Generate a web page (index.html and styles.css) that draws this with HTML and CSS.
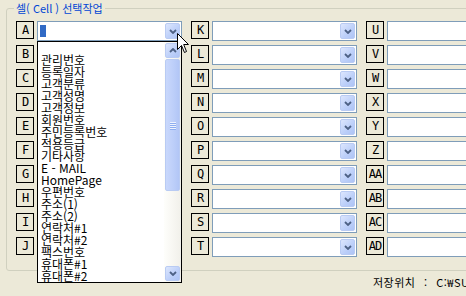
FILE: index.html
```html
<!DOCTYPE html>
<html lang="ko">
<head>
    <meta charset="UTF-8">
    <title>셀 선택작업</title>
    <link rel="stylesheet" href="styles.css">
</head>
<body>
<fieldset class="group">
    <legend>셀( Cell ) 선택작업</legend>
    <div class="cols" id="cols"></div>
</fieldset>
<div class="footer">저장위치 : C:₩SU</div>
<svg class="cursor" width="13" height="21" viewBox="0 0 13 21">
    <path d="M0.5 0.5V16.5L4.5 12.5L7.5 19.5L9.5 18.5L6.7 11.5H11.5Z" fill="#fff" stroke="#000"/>
</svg>
<script>
    var keys = ['A', 'B', 'C', 'D', 'E', 'F', 'G', 'H', 'I', 'J',
        'K', 'L', 'M', 'N', 'O', 'P', 'Q', 'R', 'S', 'T',
        'U', 'V', 'W', 'X', 'Y', 'Z', 'AA', 'AB', 'AC', 'AD'];
    var fields = ['', '관리번호', '등록일자', '고객분류', '고객성명', '고객정보', '회원번호', '주민등록번호',
        '적용등급', '기타사항', 'E - MAIL', 'HomePage', '우편번호', '주소(1)', '주소(2)',
        '연락처#1', '연락처#2', '팩스번호', '휴대폰#1', '휴대폰#2'];
    var chevron = '<svg width="8" height="5" viewBox="0 0 8 5"><path d="M1 1L4 4L7 1" fill="none" stroke="#4d6185" stroke-width="1.8"/></svg>';
    var chevronUp = '<svg width="8" height="5" viewBox="0 0 8 5"><path d="M1 4L4 1L7 4" fill="none" stroke="#4d6185" stroke-width="1.8"/></svg>';

    function makeList() {
        var html = '<div class="list"><div class="items">';
        for (var i = 0; i < fields.length; i++) {
            html += '<div>' + fields[i] + '</div>';
        }
        html += '</div><div class="scroll">' +
            '<div class="sbtn">' + chevronUp + '</div>' +
            '<div class="thumb"><i></i><i></i><i></i><i></i></div>' +
            '<div class="track"></div>' +
            '<div class="sbtn">' + chevron + '</div></div></div>';
        return html;
    }

    var cols = document.getElementById('cols');
    for (var c = 0; c < 3; c++) {
        var col = document.createElement('div');
        col.className = 'col';
        for (var r = 0; r < 10; r++) {
            var idx = c * 10 + r;
            var row = document.createElement('div');
            row.className = 'row';
            var html = '<div class="key">' + keys[idx] + '</div><div class="combo">';
            if (idx === 0) {
                html += '<span class="sel"></span>';
            }
            html += '<div class="btn">' + chevron + '</div>';
            if (idx === 0) {
                html += makeList();
            }
            html += '</div>';
            row.innerHTML = html;
            col.appendChild(row);
        }
        cols.appendChild(col);
    }
</script>
</body>
</html>
```

FILE: styles.css
```css
* {
    box-sizing: border-box;
}

html, body {
    margin: 0;
    height: 100%;
    overflow: hidden;
}

body {
    position: relative;
    background-color: #ece9d8;
    color: #000;
    font-family: "Noto Sans CJK KR", sans-serif;
    font-size: 12px;
}

.group {
    margin: 1px 0 0 6px;
    width: 560px;
    height: 270px;
    border: 1px solid #d0d0bf;
    border-radius: 3px;
    padding: 6px 0 0 9px;
}

.group legend {
    margin-left: -2px;
    padding: 0 2px;
    color: #0046d5;
    font-size: 11px;
    line-height: 14px;
}

.cols {
    display: flex;
    gap: 9px;
}

.col {
    display: flex;
    flex-direction: column;
    gap: 4px;
}

.row {
    display: flex;
    gap: 3px;
    height: 20px;
}

.key {
    width: 18px;
    height: 18px;
    border: 1px solid #000;
    font-family: "DejaVu Sans Mono", monospace;
    font-size: 12px;
    line-height: 16px;
    text-align: center;
    letter-spacing: -1px;
}

.combo {
    position: relative;
    display: flex;
    width: 145px;
    height: 20px;
    padding: 1px;
    border: 1px solid #7f9db9;
    background-color: #fff;
}

.combo .sel {
    margin: 2px 0 0 1px;
    width: 6px;
    height: 12px;
    background-color: #316ac5;
}

.btn, .sbtn {
    display: flex;
    align-items: center;
    justify-content: center;
    width: 15px;
    height: 16px;
    border: 1px solid #b9cbf3;
    border-radius: 2px;
    background: linear-gradient(135deg, #dce6fd, #bccff9 60%, #aec4f5);
}

.btn {
    margin-left: auto;
}

.list {
    position: absolute;
    left: -1px;
    top: 19px;
    z-index: 2;
    display: flex;
    width: 145px;
    height: 242px;
    border: 1px solid #000;
    background-color: #fff;
}

.items {
    flex: 1;
    padding-left: 3px;
}

.items div {
    height: 12px;
    line-height: 12px;
    white-space: nowrap;
}

.scroll {
    display: flex;
    flex-direction: column;
    gap: 1px;
    width: 17px;
    padding: 1px;
    background: linear-gradient(to right, #fefefb, #f1f0ea);
}

.sbtn {
    height: 15px;
}

.thumb {
    display: flex;
    flex-direction: column;
    align-items: center;
    justify-content: center;
    gap: 1px;
    height: 132px;
    border: 1px solid #b9cbf3;
    border-radius: 2px;
    background: linear-gradient(to right, #c9d8fc, #bccef9 60%, #b2c6f6);
}

.thumb i {
    width: 6px;
    height: 1px;
    background-color: #eef3fe;
    box-shadow: 0 1px 0 #8eaef0;
}

.track {
    flex: 1;
}

.footer {
    padding: 4px 0 0 373px;
    font-size: 11px;
    line-height: 14px;
    white-space: nowrap;
    word-spacing: 5px;
    letter-spacing: 0.5px;
}

.cursor {
    position: absolute;
    left: 177px;
    top: 33px;
    z-index: 5;
}
```
